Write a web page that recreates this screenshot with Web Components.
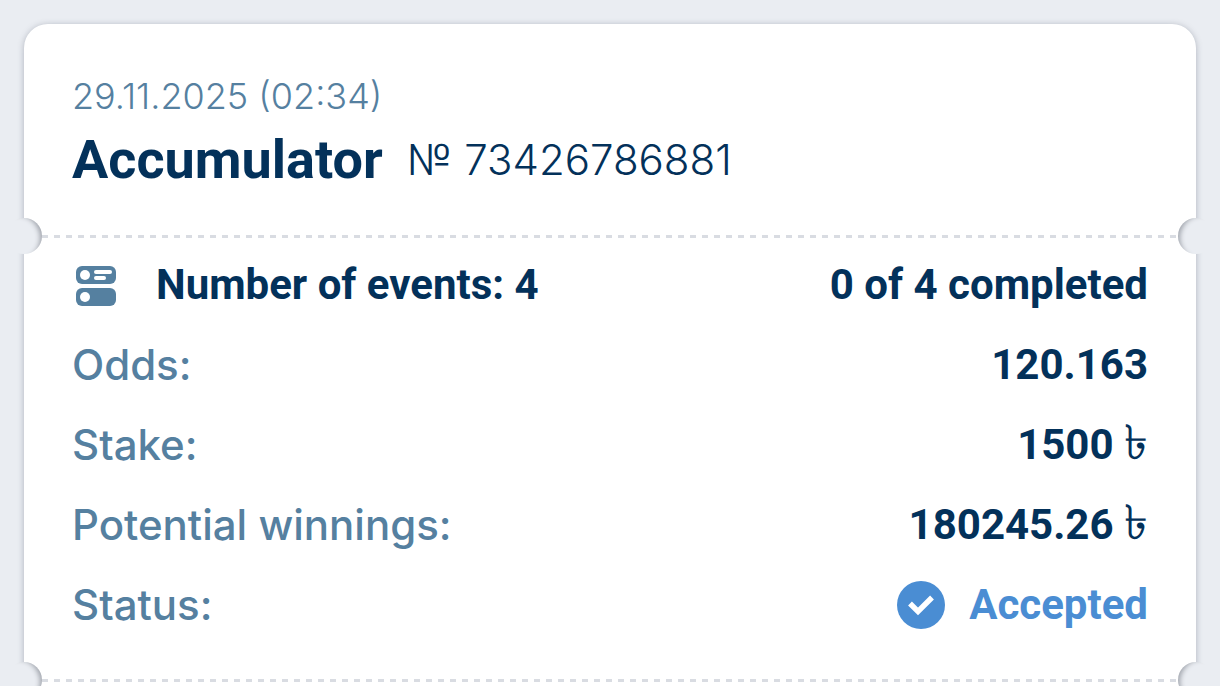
<!DOCTYPE html>
<html lang="en">
<head>
  <meta charset="utf-8">
  <meta name="viewport" content="width=device-width, initial-scale=1">
  <title>Accumulator</title>
  <style>
    html {
      background: #eaedf2;
    }
    body {
      margin: 0;
      height: 100vh;
      overflow: hidden;
      font-family: Roboto, "Liberation Sans", "Noto Sans", sans-serif;
      color: #03315a;
    }
  </style>
</head>
<body>
  <bet-ticket>
    <ticket-header slot="header" date="29.11.2025 (02:34)" number="73426786881">Accumulator</ticket-header>
    <ticket-row>
      <events-icon slot="icon"></events-icon>
      <strong slot="label">Number of events: 4</strong>
      0 of 4 completed
    </ticket-row>
    <ticket-row><span slot="label">Odds:</span>120.163</ticket-row>
    <ticket-row><span slot="label">Stake:</span>1500 <taka-sign></taka-sign></ticket-row>
    <ticket-row><span slot="label">Potential winnings:</span>180245.26 <taka-sign></taka-sign></ticket-row>
    <ticket-row><span slot="label">Status:</span><bet-status>Accepted</bet-status></ticket-row>
  </bet-ticket>

  <script>
    function define (name, html) {
      customElements.define(
        name,
        class extends HTMLElement {
          constructor () {
            super()
            this.attachShadow({ mode: 'open' })
            this.shadowRoot.innerHTML = html
          }
        }
      )
    }

    define('taka-sign', `
      <style>
        :host {
          font-family: Inter, "Noto Sans", sans-serif;
          font-size: 48px;
          font-weight: 400;
          line-height: 1px;
        }
      </style>
      <span>৳</span>
    `)

    define('events-icon', `
      <style>
        :host {
          display: block;
          width: 48px;
          height: 48px;
          margin-right: 36px;
          color: #5580a0;
        }
        svg {
          display: block;
        }
      </style>
      <svg width="48" height="48" viewBox="0 0 48 48" aria-hidden="true">
        <rect x="4" y="5" width="40" height="18" rx="6" fill="currentColor" />
        <rect x="4" y="27" width="40" height="18" rx="6" fill="currentColor" />
        <g fill="#fff">
          <circle cx="13" cy="14" r="5" />
          <circle cx="13" cy="36" r="5" />
          <rect x="22" y="9" width="18" height="4" rx="2" />
          <rect x="22" y="15" width="12" height="4" rx="2" />
        </g>
      </svg>
    `)

    define('bet-status', `
      <style>
        :host {
          display: flex;
          align-items: center;
          gap: 24px;
          color: #4a8dd3;
        }
      </style>
      <svg width="48" height="48" viewBox="0 0 48 48" aria-hidden="true">
        <circle cx="24" cy="24" r="24" fill="currentColor" />
        <path d="M13 22.5l8 8L35 16.5" fill="none" stroke="#fff" stroke-width="5.4" />
      </svg>
      <span><slot></slot></span>
    `)

    define('ticket-row', `
      <style>
        :host {
          display: flex;
          align-items: center;
          height: 48px;
          font-size: 42px;
          line-height: 48px;
        }
        .label {
          flex: 1;
          font-family: Inter, sans-serif;
          font-weight: 500;
          color: #5580a0;
        }
        ::slotted(strong) {
          display: block;
          font-family: Roboto, sans-serif;
          font-weight: 700;
          color: #03315a;
        }
        ::slotted(span) {
          display: block;
        }
        .value {
          font-weight: 700;
          white-space: nowrap;
        }
      </style>
      <slot name="icon"></slot>
      <div class="label"><slot name="label"></slot></div>
      <div class="value"><slot></slot></div>
    `)

    // Perforated tear line with a notch cut into each edge of the card
    define('ticket-divider', `
      <style>
        :host {
          display: flex;
          align-items: center;
          margin: 0 -18px;
        }
        .notch {
          width: 36px;
          height: 36px;
          border-radius: 50%;
          background: #eaedf2;
        }
        .left {
          box-shadow: inset -7px 2px 5px -5px #a0a4ac;
        }
        .right {
          box-shadow: inset 7px 2px 5px -5px #a0a4ac;
        }
        .line {
          flex: 1;
          height: 3px;
          background: repeating-linear-gradient(to right, #d9dce2 0 6px, transparent 6px 12px);
        }
      </style>
      <div class="notch left"></div>
      <div class="line"></div>
      <div class="notch right"></div>
    `)

    define('bet-ticket', `
      <style>
        :host {
          display: block;
          margin: 24px;
          border-radius: 24px;
          background: #fff;
          box-shadow: 0 1px 6px rgba(60, 70, 90, 0.35);
        }
        .rows {
          display: flex;
          flex-direction: column;
          gap: 32px;
          padding: 7px 48px 33px;
        }
        .end {
          height: 24px;
        }
      </style>
      <slot name="header"></slot>
      <ticket-divider></ticket-divider>
      <div class="rows"><slot></slot></div>
      <ticket-divider></ticket-divider>
      <div class="end"></div>
    `)

    customElements.define(
      'ticket-header',
      class TicketHeader extends HTMLElement {
        constructor () {
          super()
          this.attachShadow({ mode: 'open' })
          this.shadowRoot.innerHTML = `
            <style>
              :host {
                display: flex;
                flex-direction: column;
                gap: 8px;
                padding: 48px 48px 26px;
              }
              time {
                font-family: Inter, sans-serif;
                font-size: 36px;
                font-weight: 300;
                line-height: 48px;
                color: #5580a0;
              }
              .title {
                display: flex;
                align-items: center;
                gap: 24px;
                line-height: 64px;
              }
              h1 {
                margin: 0;
                font-size: 54px;
                font-weight: 700;
              }
              .number {
                font-family: Inter, sans-serif;
                font-size: 42px;
                font-weight: 300;
              }
            </style>
            <time></time>
            <div class="title">
              <h1><slot></slot></h1>
              <span class="number"></span>
            </div>
          `
        }

        connectedCallback () {
          this.shadowRoot.querySelector('time').textContent = this.getAttribute('date')
          this.shadowRoot.querySelector('.number').textContent = `№ ${this.getAttribute('number')}`
        }
      }
    )
  </script>
</body>
</html>
